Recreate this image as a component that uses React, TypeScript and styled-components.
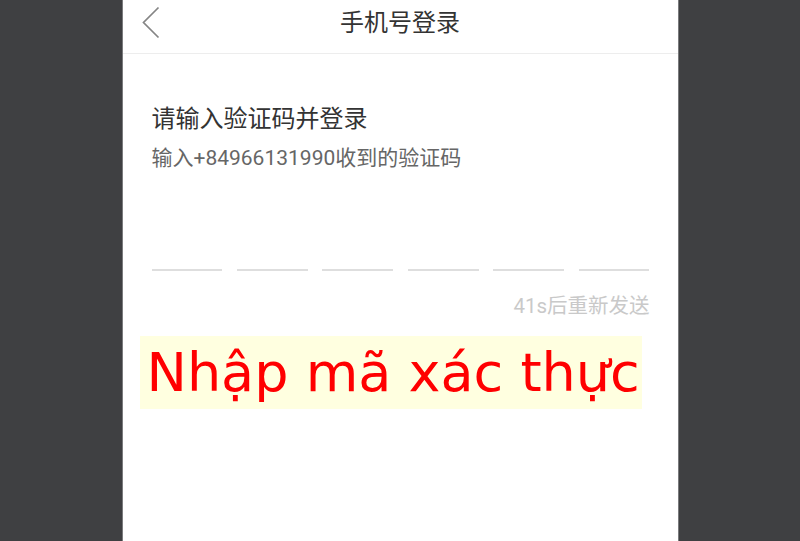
import styled, { createGlobalStyle } from 'styled-components'

// --- Global ---

const GlobalStyle = createGlobalStyle`
  html, body {
    margin: 0;
    padding: 0;
    background: #3f4042;
  }
  * {
    box-sizing: border-box;
  }
`;

// --- Styled Components ---

const Page = styled.div`
  display: flex;
  justify-content: center;
  height: 541px;
  overflow: hidden;
`;

const Phone = styled.main`
  width: 557px;
  height: 100%;
  background: #ffffff;
  border-left: 1px solid #7a7b7d;
  border-right: 1px solid #7a7b7d;
  display: flex;
  flex-direction: column;
  font-family: Roboto, "Noto Sans CJK SC", sans-serif;
`;

const Header = styled.header`
  height: 54px;
  border-bottom: 1px solid #ededed;
  display: grid;
  grid-template-columns: 1fr auto 1fr;
  align-items: center;
  padding-bottom: 8px;
`;

const BackButton = styled.button`
  justify-self: start;
  background: transparent;
  border: none;
  padding: 0 0 0 18px;
  display: flex;
  align-items: center;
  cursor: pointer;
`;

const Title = styled.h1`
  margin: 0;
  font-size: 24px;
  font-weight: 400;
  color: #333333;
  line-height: 30px;
`;

const Body = styled.section`
  display: flex;
  flex-direction: column;
  padding: 0 28px 0 29px;
`;

const Heading = styled.h2`
  margin: 49px 0 0;
  font-size: 24px;
  font-weight: 400;
  line-height: 32px;
  color: #333333;
`;

const Hint = styled.p`
  margin: 9px 0 0;
  font-size: 21px;
  line-height: 28px;
  color: #666666;
`;

const CodeRow = styled.div`
  display: grid;
  grid-template-columns: repeat(6, 1fr);
  gap: 14.6px;
  margin-top: 51px;
`;

const CodeCell = styled.div`
  height: 48px;
  border-bottom: 2px solid #dedede;
`;

const Resend = styled.p`
  margin: 21px 0 0;
  align-self: flex-end;
  font-size: 20.5px;
  line-height: 28px;
  color: #c9c9c9;
`;

const Label = styled.div`
  align-self: flex-start;
  margin: 16px 0 0 -12px;
  padding: 0 2px 0 7px;
  background: #ffffe0;
  color: #ff0000;
  font-family: "DejaVu Sans", Verdana, sans-serif;
  font-size: 54px;
  line-height: 73px;
  white-space: nowrap;
`;

function BackIcon() {
  return (
    <svg width="20" height="33" viewBox="0 0 20 33" aria-hidden="true">
      <path d="M17.5 1.5 L2.5 16.5 L17.5 31.5" fill="none" stroke="#858585" strokeWidth="1.7" />
    </svg>
  )
}

export default function App() {
  const cells = [0, 1, 2, 3, 4, 5]
  return (
    <>
      <GlobalStyle />
      <Page>
        <Phone>
          <Header>
            <BackButton type="button" aria-label="返回">
              <BackIcon />
            </BackButton>
            <Title>手机号登录</Title>
            <span />
          </Header>
          <Body>
            <Heading>请输入验证码并登录</Heading>
            <Hint>输入+84966131990收到的验证码</Hint>
            <CodeRow>
              {cells.map(i => (
                <CodeCell key={i} />
              ))}
            </CodeRow>
            <Resend>41s后重新发送</Resend>
            <Label>Nhập mã xác thực</Label>
          </Body>
        </Phone>
      </Page>
    </>
  )
}
